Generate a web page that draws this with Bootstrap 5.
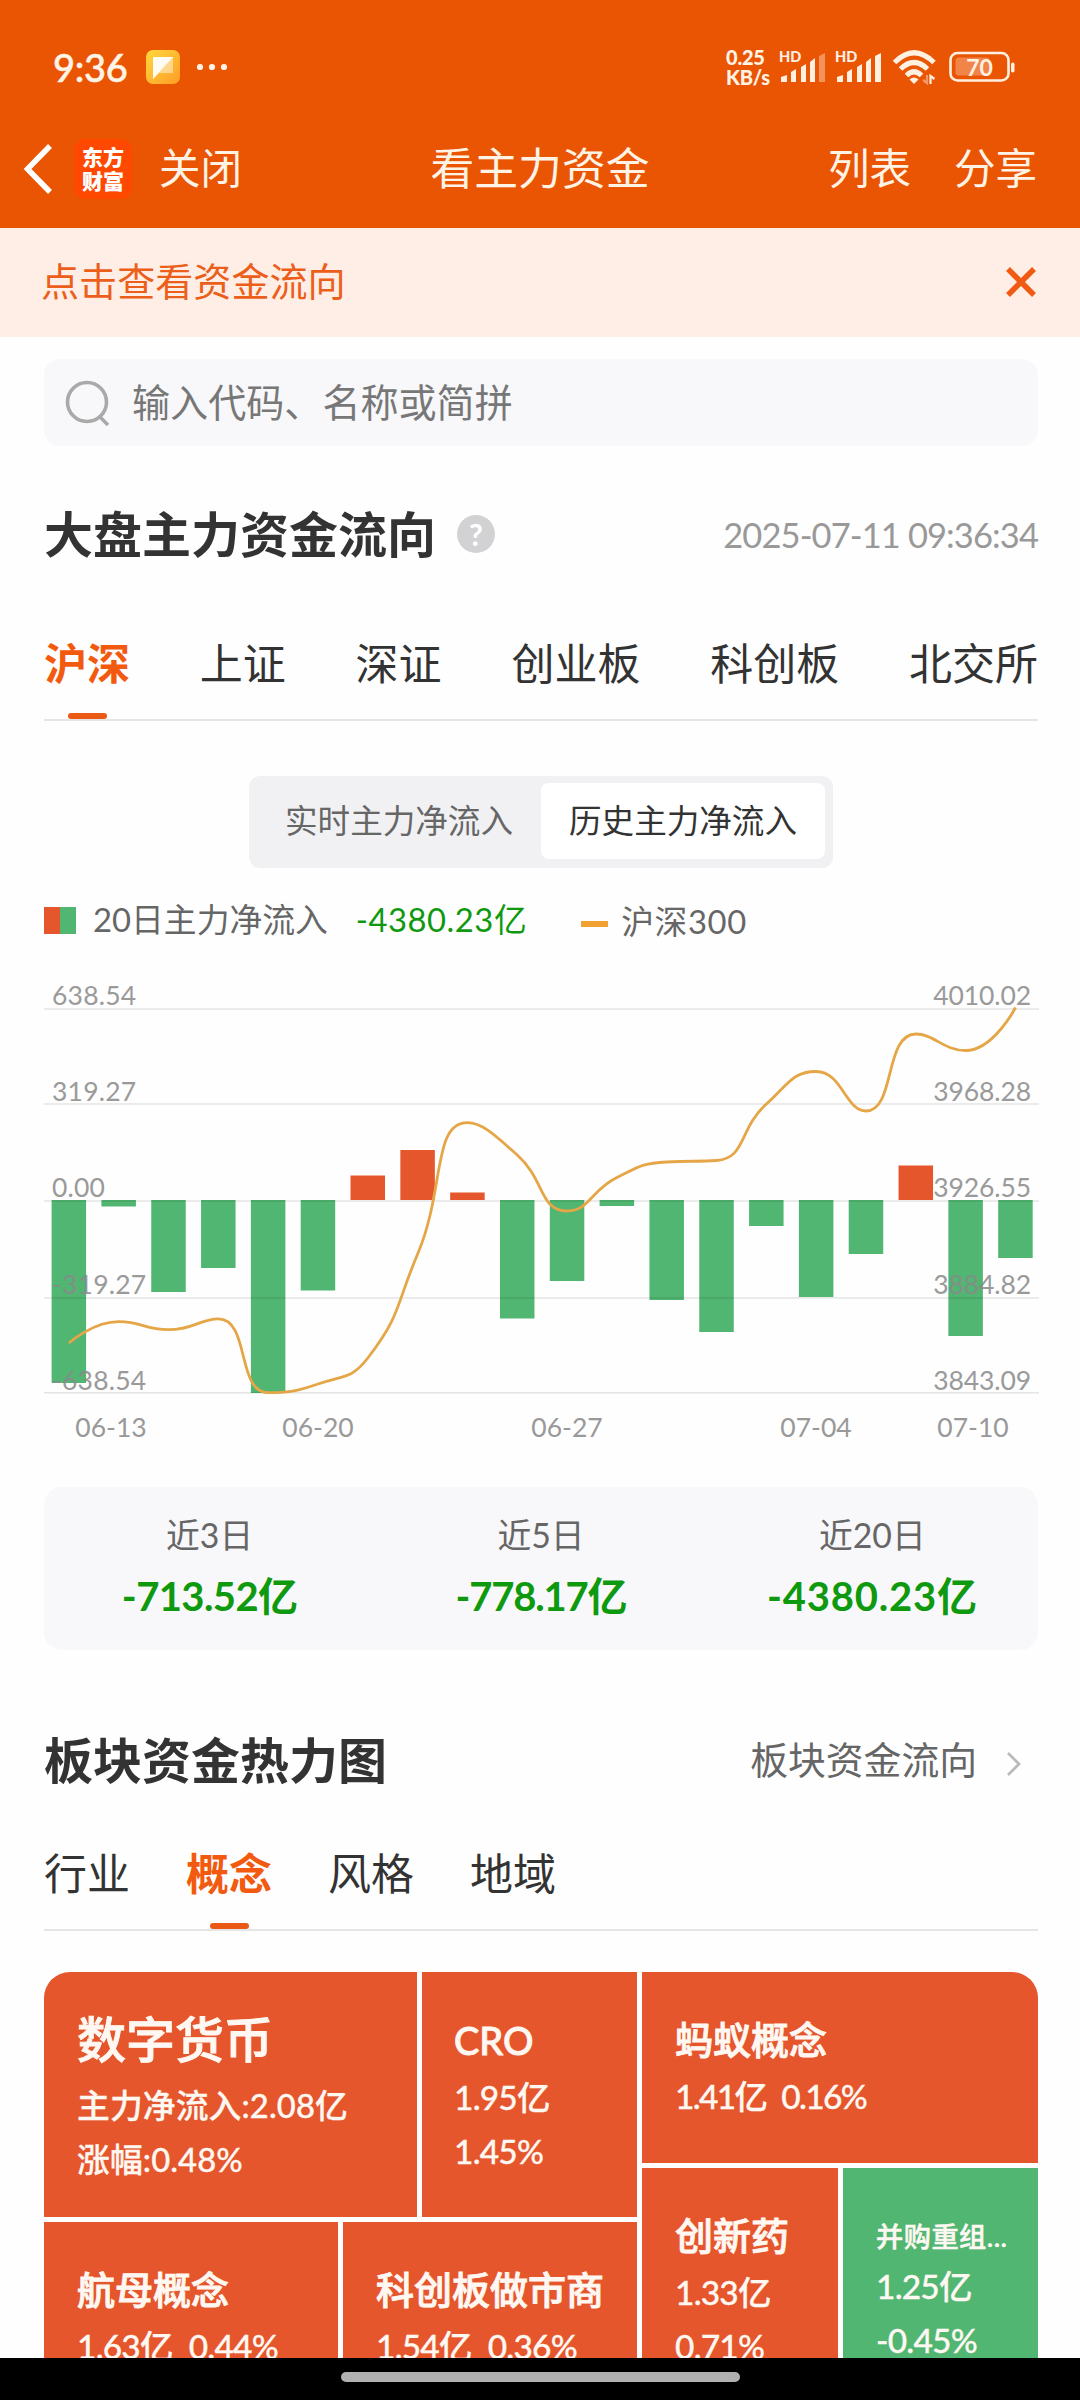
<!DOCTYPE html>
<html lang="zh-CN">
<head>
<meta charset="utf-8">
<meta name="viewport" content="width=device-width, initial-scale=1">
<title>看主力资金</title>
<link href="https://cdn.jsdelivr.net/npm/bootstrap@5.3.0/dist/css/bootstrap.min.css" rel="stylesheet">
<style>
  :root { --brand: #ea5504; --up: #e5562d; --down: #51b672; --ink: #333; }
  html, body { height: 2400px; overflow: hidden; }
  body { font-family: Lato, "Noto Sans CJK SC", sans-serif; color: var(--ink); background: #fefefe; line-height: 1; }
  .app-head { background: var(--brand); height: 228px; color: #fff3e6; }
  .status-row { height: 116px; padding: 18px 65px 0 53px; }
  .status-row svg { overflow: visible; }
  .clock { font-size: 38px; font-weight: 500; width: 93px; letter-spacing: -.3px; -webkit-text-stroke: .5px; }
  .net-speed { font-size: 20px; font-weight: 900; width: 53px; letter-spacing: -.2px; }
  .net-speed div { height: 20px; line-height: 20px; }
  .title-row { height: 106px; font-size: 41.5px; display: grid; grid-template-columns: 1fr 220px 1fr; align-items: center; }
  .title-row .page-name { font-size: 43.8px; text-align: center; white-space: nowrap; }
  .title-actions { gap: 43px; padding-right: 43px; }
  .brand-logo { width: 58px; height: 60px; border-radius: 11px; background: #ff4800; color: #fff; font-size: 21px; line-height: 24px; font-weight: 900; padding-top: 6px; margin: 0 27px 0 20px; }
  .tip { height: 109px; background: #ffeee6; color: #ec5f1b; font-size: 38.1px; padding: 0 44px 2px 41px; }
  .page-body { padding: 22px 42px 0 44px; height: 2021px; overflow: hidden; }
  .search { height: 87px; border-radius: 16px; background: #f8f8fa; color: #777; font-size: 38.1px; padding-left: 21px; gap: 23px; }
  .sec-title { font-size: 49px; font-weight: 700; }
  .sec-head { height: 60px; }
  .help { width: 38px; height: 38px; background: #d2d2d4; color: #fff; font-size: 30px; font-weight: 700; margin-left: 21px; }
  .stamp { font-size: 34.5px; color: #999; letter-spacing: -.9px; padding-top: 2px; }
  .tabs-line { height: 79px; border-bottom: 2px solid #e5e5e6; font-size: 43px; }
  .tabs-line .nav-link { color: var(--ink); padding: 0; height: 77px; position: relative; }
  .tabs-line .nav-link.active { color: #f25a10; font-weight: 700; }
  .tabs-line .nav-link.active::after { content: ""; position: absolute; left: calc(50% - 19.5px); bottom: 0; width: 39px; height: 6px; border-radius: 3px; background: #ea5a14; }
  .seg { width: 584px; height: 92px; background: #f1f1f4; border-radius: 11px; padding: 7px 8px 9px; font-size: 32.6px; color: #666; }
  .seg .on { width: 284px; background: #fff; border-radius: 8px; color: var(--ink); }
  .legend-row { height: 44px; font-size: 32.8px; color: #666; }
  .swatch { width: 32px; height: 27px; background: linear-gradient(90deg, var(--up) 50%, var(--down) 50%); }
  .dash { width: 27px; height: 6px; background: #f2a232; }
  .loss { color: #0f990f; }
  .chart { display: block; width: 996px; height: 480px; font-size: 26.5px; margin-top: 28px; }
  .sum { height: 163px; border-radius: 18px; background: #f8f8fa; margin-top: 37px; padding-top: 2px; }
  .sum .cap { font-size: 33.8px; color: #666; line-height: 44px; }
  .sum .val { font-size: 40px; font-weight: 700; line-height: 60px; letter-spacing: -.6px; margin-top: 9px; }
  .sum .val.tight { letter-spacing: -1.2px; }
  .sum .val.wide { letter-spacing: .8px; }
  .more { font-size: 37.8px; color: #666; }
  .heat { gap: 5px; height: 420px; margin-top: 41px; }
  .heat div { gap: 5px; }
  .tile { background: var(--up); color: #fff8f2; padding-left: 33px; white-space: nowrap; overflow: hidden; }
  .tile.fall { background: var(--down); }
  .tile .nm { font-size: 38px; font-weight: 500; line-height: 54px; margin-bottom: 3px; -webkit-text-stroke: .9px; }
  .tile .ln { font-size: 33.5px; line-height: 54px; letter-spacing: -.8px; font-weight: 500; -webkit-text-stroke: .3px; }
  .tile .ln.tight { letter-spacing: -1.7px; }
  .tile.big .nm { font-size: 49px; line-height: 66px; margin-bottom: 7px; }
  .tile.big .ln { font-size: 32.8px; letter-spacing: .1px; }
  .home { height: 42px; background: #000; padding-top: 14px; }
  .home div { width: 399px; height: 10px; border-radius: 5px; background: #b1b1b1; }
</style>
</head>
<body>
<header class="app-head">
  <div class="status-row d-flex align-items-center">
    <span class="clock">9:36</span>
    <svg width="34" height="34" viewBox="0 0 34 34">
      <defs><linearGradient id="noteBg" x1="0" y1="0" x2="1" y2="1"><stop offset="0" stop-color="#ffd83d"/><stop offset="1" stop-color="#ff9d27"/></linearGradient></defs>
      <rect width="34" height="34" rx="7" fill="url(#noteBg)"/>
      <path d="M8 7h19v16H13l-6 6V8z" fill="#fff" opacity=".45"/><path d="M8 7h19L7 29V8z" fill="#fffdf3"/>
    </svg>
    <svg class="ms-3" width="34" height="8" viewBox="0 0 34 8" fill="#fff3e6"><circle cx="4" cy="4" r="3.1"/><circle cx="16" cy="4" r="3.1"/><circle cx="28" cy="4" r="3.1"/></svg>
    <div class="net-speed ms-auto"><div>0.25</div><div>KB/s</div></div>
    <svg width="103" height="34" viewBox="0 0 103 34" fill="#fff0e2">
      <g font-size="14.500" font-weight="900"><text x="0" y="12">HD</text><text x="56" y="12">HD</text></g>
      <path id="simBars" d="M2 27l6-2v7H2zM12 22l5-3v13h-5zM22 17l5-3v18h-5zM31 12l5-4v24h-5z"/>
      <path d="M40 6l6-3v29h-6z" opacity=".4"/>
      <use href="#simBars" x="56"/><path d="M96 6l6-3v29h-6z"/>
    </svg>
    <svg style="margin-left:10px" width="46" height="34" viewBox="0 0 46 34" fill="none" stroke="#fff0e2" stroke-width="5">
      <path d="M2.500 12.500Q22-7 42 12.500M8.500 19Q22 6 35.500 19M14.500 25.500Q22 18 29.500 25.500"/><path d="M17.500 29.500q4.500-4 9 0L22 34z" fill="#fff0e2" stroke="none"/>
      <path d="M35 25v8l-4-3" stroke-width="2.200" opacity=".45"/><path d="M38.500 34v-8l4 3" stroke-width="2.200"/>
    </svg>
    <svg style="margin-left:11px" width="66" height="32" viewBox="0 0 66 32">
      <rect x="1.500" y="2" width="58" height="27.500" rx="7" fill="none" stroke="#fff0e2" stroke-width="2.600"/>
      <rect x="6.500" y="6.500" width="34" height="18" rx="3" fill="#fff" opacity=".28"/><rect x="62" y="11.500" width="3.500" height="10" rx="1.700" fill="#fff0e2"/>
      <text x="30.500" y="24.500" text-anchor="middle" font-size="23" font-weight="700" fill="#fff0e2">70</text>
    </svg>
  </div>
  <div class="title-row">
    <div class="d-flex align-items-center">
      <svg width="54" height="52" viewBox="0 0 54 52" fill="none" stroke="#fff" stroke-width="5.500"><path d="M50 3L27.500 26 50 49"/></svg>
      <div class="brand-logo text-center">东方<br>财富</div>
      <span>关闭</span>
    </div>
    <span class="page-name">看主力资金</span>
    <div class="title-actions d-flex justify-content-end"><span>列表</span><span>分享</span></div>
  </div>
</header>
<div class="tip d-flex align-items-center justify-content-between">
  <span>点击查看资金流向</span>
  <svg width="30" height="30" viewBox="0 0 30 30" stroke="#f05a12" stroke-width="5.500"><path d="M2 2l26 26M28 2L2 28"/></svg>
</div>
<main class="page-body">
  <div class="search d-flex align-items-center">
    <svg width="44" height="48" viewBox="0 0 44 48" fill="none" stroke="#a9a9a9" stroke-width="3.600"><circle cx="22" cy="23" r="19.500"/><path d="M34.500 37.500L43 46"/></svg>
    <span>输入代码、名称或简拼</span>
  </div>
  <div class="sec-head d-flex align-items-center" style="margin-top:58px">
    <span class="sec-title">大盘主力资金流向</span>
    <span class="help rounded-circle d-inline-flex align-items-center justify-content-center">?</span>
    <span class="stamp ms-auto">2025-07-11 09:36:34</span>
  </div>
  <nav class="tabs-line nav flex-nowrap justify-content-between" style="margin-top:78px">
    <a class="nav-link active">沪深</a><a class="nav-link">上证</a><a class="nav-link">深证</a><a class="nav-link">创业板</a><a class="nav-link">科创板</a><a class="nav-link">北交所</a>
  </nav>
  <div class="seg d-flex mx-auto" style="margin-top:55px">
    <div class="flex-fill d-flex align-items-center justify-content-center">实时主力净流入</div>
    <div class="on d-flex align-items-center justify-content-center">历史主力净流入</div>
  </div>
  <div class="legend-row d-flex align-items-center" style="margin-top:30px">
    <span class="swatch"></span><span style="margin-left:17px">20日主力净流入</span>
    <span class="loss" style="margin-left:28px;letter-spacing:.5px">-4380.23亿</span>
    <span class="dash mt-2" style="margin-left:54px"></span><span style="margin:5px 0 0 13px;letter-spacing:.6px">沪深300</span>
  </div>
  <svg class="chart" id="flowChart" viewBox="44 970 996 480"></svg>
  <div class="sum row g-0 text-center align-content-center">
    <div class="col"><div class="cap">近3日</div><div class="val loss">-713.52亿</div></div>
    <div class="col"><div class="cap">近5日</div><div class="val tight loss">-778.17亿</div></div>
    <div class="col"><div class="cap">近20日</div><div class="val wide loss">-4380.23亿</div></div>
  </div>
  <div class="sec-head d-flex align-items-center" style="margin-top:80px">
    <span class="sec-title">板块资金热力图</span>
    <span class="more ms-auto">板块资金流向</span>
    <svg style="margin:8px 16px 0 29px" width="16" height="26" viewBox="0 0 16 26" fill="none" stroke="#bbb" stroke-width="2.800"><path d="M2 2l11 11L2 24"/></svg>
  </div>
  <nav class="tabs-line nav flex-nowrap" style="margin-top:62px;gap:56px">
    <a class="nav-link">行业</a><a class="nav-link active">概念</a><a class="nav-link">风格</a><a class="nav-link">地域</a>
  </nav>
  <div class="heat d-flex">
    <div class="d-flex flex-column" style="width:593px">
      <div class="d-flex" style="height:245px">
        <div class="tile big" style="width:373px;border-top-left-radius:26px;padding-top:34px"><div class="nm">数字货币</div><div class="ln">主力净流入:2.08亿</div><div class="ln">涨幅:0.48%</div></div>
        <div class="tile flex-fill" style="padding:41px 0 0 32px"><div class="nm">CRO</div><div class="ln">1.95亿</div><div class="ln">1.45%</div></div>
      </div>
      <div class="d-flex flex-fill">
        <div class="tile" style="width:294px;padding-top:40px"><div class="nm">航母概念</div><div class="ln">1.63亿&ensp;0.44%</div></div>
        <div class="tile flex-fill" style="padding-top:40px"><div class="nm">科创板做市商</div><div class="ln">1.54亿&ensp;0.36%</div></div>
      </div>
    </div>
    <div class="d-flex flex-column flex-fill">
      <div class="tile" style="height:191px;border-top-right-radius:26px;padding-top:40px"><div class="nm">蚂蚁概念</div><div class="ln tight">1.41亿&ensp;0.16%</div></div>
      <div class="d-flex flex-fill">
        <div class="tile" style="width:196px;padding-top:40px"><div class="nm">创新药</div><div class="ln">1.33亿</div><div class="ln">0.71%</div></div>
        <div class="tile fall flex-fill" style="padding-top:45px"><div class="nm" style="font-size:27.200px;line-height:47px;letter-spacing:.5px;margin-bottom:-1px;-webkit-text-stroke-width:.5px">并购重组...</div><div class="ln">1.25亿</div><div class="ln">-0.45%</div></div>
      </div>
    </div>
  </div>
</main>
<footer class="home"><div class="mx-auto"></div></footer>
<script src="https://cdn.jsdelivr.net/npm/bootstrap@5.3.0/dist/js/bootstrap.bundle.min.js"></script>
<script>
  // Daily net inflow bars: each entry is the y of the bar's far end, measured from the zero line at 1200.
  const zero = 1200;
  const ends = [1383,1206.5,1292,1268,1393,1290.5,1175.5,1150,1192.5,1318.5,1281,1206,1300,1332,1226,1297,1254,1165.5,1336,1258];
  const index = [1343,1321.7,1329.7,1318.8,1392.700,1384,1358,1254,1122.7,1155,1211,1177.5,1162,1160.5,1104,1071.5,1111,1034,1050.5,1007.5];
  const grid = [1009,1104,1201,1298,1392.7];
  const left = ['638.54','319.27','0.00','-319.27','-638.54'];
  const right = ['4010.02','3968.28','3926.55','3884.82','3843.09'];
  const base = [1005,1101,1197,1294,1390];
  const dates = [['06-13',111],['06-20',318],['06-27',567],['07-04',816],['07-10',973]];
  let s = '';
  ends.forEach((e, i) => {
    s += `<rect x="${51.600 + 49.820 * i}" y="${Math.min(e, zero)}" width="34.500" height="${Math.abs(e - zero)}" fill="${e < zero ? '#e5562d' : '#51b672'}"/>`;
  });
  grid.forEach(y => s += `<path d="M44 ${y}H1039" stroke="#000" stroke-opacity=".1" stroke-width="1.500"/>`);

  // Smooth curve whose control points never leave the box of the two neighbouring points.
  const pts = index.map((y, i) => [68.900 + 49.820 * i, y]);
  const clamp = (c, a, b) => c.map((v, k) => Math.max(Math.min(v, Math.max(a[k], b[k])), Math.min(a[k], b[k])));
  const dist = (a, b) => Math.hypot(a[0] - b[0], a[1] - b[1]);
  let d = `M${pts[0]}`, out = pts[0];
  for (let i = 1; i < pts.length; i++) {
    const a = pts[i - 1], p = pts[i], n = pts[i + 1];
    let cin = p, cout = p;
    if (n) {
      const d0 = dist(p, a), d1 = dist(n, p), r = d1 / (d0 + d1);
      cout = clamp(p.map((v, k) => v + (n[k] - a[k]) * .5 * r), p, n);
      cin = clamp(p.map((v, k) => v - (cout[k] - v) * d0 / d1), a, p);
      cout = p.map((v, k) => v + (v - cin[k]) * d1 / d0);
    }
    d += `C${out} ${cin} ${p}`;
    out = cout;
  }
  s += `<path d="${d}" fill="none" stroke="#e5a647" stroke-width="2.800"/>`;
  base.forEach((y, i) => {
    s += `<text x="52" y="${y}" fill="#8a8a8a" opacity=".86" letter-spacing=".2">${left[i]}</text><text x="1031" y="${y}" text-anchor="end" fill="#8a8a8a" opacity=".86" letter-spacing="-.1">${right[i]}</text>`;
  });
  dates.forEach(([t, x]) => s += `<text x="${x}" y="1436.500" text-anchor="middle" fill="#999">${t}</text>`);
  document.getElementById('flowChart').innerHTML = s;
</script>
</body>
</html>
